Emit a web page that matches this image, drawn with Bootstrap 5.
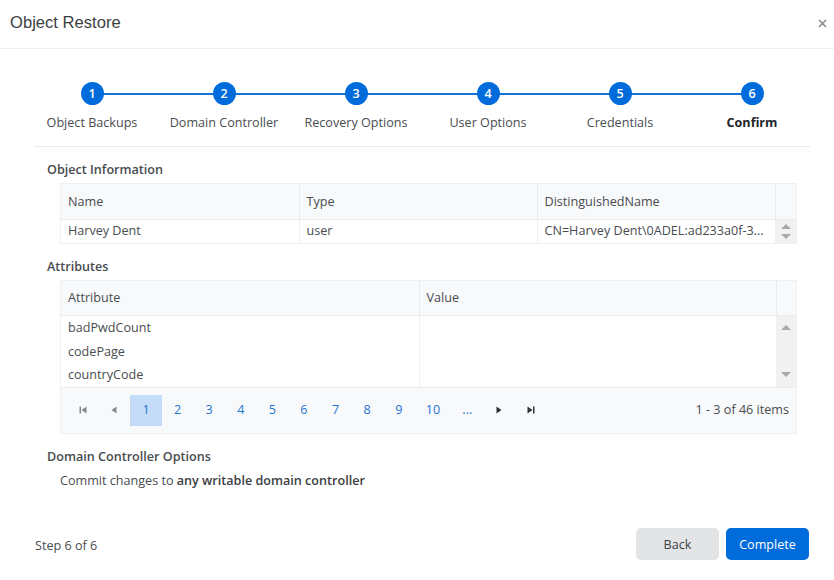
<!doctype html>
<html lang="en"><head><meta charset="utf-8"><title>Object Restore</title>
<link href="https://cdn.jsdelivr.net/npm/bootstrap@5.3.0/dist/css/bootstrap.min.css" rel="stylesheet">
<style>
html,body{height:580px;overflow:hidden;background:#fff}
body{font-family:"Open Sans","Noto Sans",sans-serif;font-size:12.6px;color:#484c50}
.dlg-head{height:49px;padding:0 7px 2px 10px;border-bottom:1px solid #eef0f2}
.dlg-title{font-family:"Liberation Sans",sans-serif;font-size:16.6px;font-weight:400;color:#3b3f43;margin:0}
.dlg-close{line-height:1;background:none;border:0;padding:0;display:flex}
.dlg-body{padding:33px 24px 0 34px}
.stepper{display:grid;grid-template-columns:repeat(6,132px);margin:0 -8px;height:65px}
.stepper-wrap{border-bottom:1px solid #e9ecef;height:65px}
.step-item{position:relative;text-align:center}
.step-item:not(:last-child)::after{content:"";position:absolute;top:10.5px;left:66px;width:132px;height:2px;background:#1473d6}
.step-dot{position:relative;z-index:1;width:23px;height:23px;border-radius:50%;background:#006bdb;color:#fff;font-size:12.6px;font-weight:600;line-height:23px;margin:0 auto 9px}
.step-name{display:block;white-space:nowrap;line-height:17px}
.step-on{font-weight:700;color:#212529}
.sec-title{font-size:12.6px;font-weight:600;color:#484c50;margin:0;line-height:17px;padding-left:13px}
.grid-box{margin:5px 13px 0 26px;border:1px solid #edeff1;width:737px}
.grid-tbl{table-layout:fixed;width:100%;margin:0;border-collapse:collapse;--bs-table-bg:transparent;--bs-table-color:#484c50}
.grid-tbl th{background:#f8f9fa;font-weight:400;height:35px;padding:2px 7px 0;border-right:1px solid #e9ecef;border-bottom:1px solid #e9ecef;vertical-align:middle}
.grid-tbl td{padding:0 7px;border-right:1px solid #f0f1f3;border-bottom:0;vertical-align:middle;white-space:nowrap;overflow:hidden}
.grid-tbl th:last-child{border-right:0}
.grid-tbl td.scroll-col{background:#f1f1f1;border-right:0;padding:0;overflow:hidden}
.row-one td{height:23px}
.row-list{display:block;line-height:23.5px}
.scroll-inner{display:flex;flex-direction:column;align-items:center;justify-content:space-between}
.up-tri{width:0;height:0;border-left:5px solid transparent;border-right:5px solid transparent;border-bottom:5px solid #a9a9a9}
.down-tri{width:0;height:0;border-left:5px solid transparent;border-right:5px solid transparent;border-top:5px solid #a9a9a9}
.scroll-a{height:23px;padding:4px 0}
.scroll-b{height:70px;padding:9px 0}
.pager-bar{height:46px;background:#f8f9fa;border-top:1px solid #e9ecef;padding:0 7px 0 6px}
.pg-btn{width:31.6px;height:31px;display:flex;align-items:center;justify-content:center;color:#1f76d2;text-decoration:none;font-size:12.6px}
.pg-wide{width:37px}
.pg-on{background:#c5dcf8}
.pg-ico{flex:none}
.opt-line{margin:7px 0 0;padding-left:26px;line-height:18px}
.opt-line b{font-weight:600;color:#3c4043}
.dlg-foot{padding:0 25px 0 35px;margin-top:38px}
.foot-step{padding-top:6px}
.foot-btns{gap:7px}
.foot-btn{width:83px;height:32px;border:0;border-radius:5px;font-size:12.6px;padding:1px 0 0;line-height:31px}
.foot-back{background:#e2e4e6;color:#3c4043}
.foot-done{background:#006bdb;color:#fff;font-weight:500}
.gap-sec1{margin-top:14px}
.gap-sec2{margin-top:14px}
.gap-sec3{margin-top:14px}
</style></head>
<body>
<header class="dlg-head d-flex align-items-center justify-content-between">
  <h1 class="dlg-title">Object Restore</h1>
  <button class="dlg-close" type="button" aria-label="Close"><svg width="9" height="9" viewBox="0 0 9 9"><path d="M1 1l7 7M8 1L1 8" stroke="#85898d" stroke-width="1.5" fill="none"/></svg></button>
</header>
<main class="dlg-body">
  <div class="stepper-wrap">
  <div class="stepper">
    <div class="step-item"><div class="step-dot">1</div><span class="step-name">Object Backups</span></div>
    <div class="step-item"><div class="step-dot">2</div><span class="step-name">Domain Controller</span></div>
    <div class="step-item"><div class="step-dot">3</div><span class="step-name">Recovery Options</span></div>
    <div class="step-item"><div class="step-dot">4</div><span class="step-name">User Options</span></div>
    <div class="step-item"><div class="step-dot">5</div><span class="step-name">Credentials</span></div>
    <div class="step-item"><div class="step-dot">6</div><span class="step-name step-on">Confirm</span></div>
  </div>
  </div>
  <h2 class="sec-title gap-sec1">Object Information</h2>
  <div class="grid-box">
    <table class="table grid-tbl">
      <colgroup><col style="width:238px"><col style="width:238px"><col style="width:238px"><col></colgroup>
      <thead><tr><th>Name</th><th>Type</th><th>DistinguishedName</th><th></th></tr></thead>
      <tbody><tr class="row-one"><td>Harvey Dent</td><td>user</td><td>CN=Harvey Dent\0ADEL:ad233a0f-3...</td>
        <td class="scroll-col"><div class="scroll-inner scroll-a"><span class="up-tri"></span><span class="down-tri"></span></div></td></tr></tbody>
    </table>
  </div>
  <h2 class="sec-title gap-sec2">Attributes</h2>
  <div class="grid-box">
    <table class="table grid-tbl">
      <colgroup><col style="width:358px"><col style="width:357px"><col></colgroup>
      <thead><tr><th>Attribute</th><th>Value</th><th></th></tr></thead>
      <tbody><tr><td><span class="row-list">badPwdCount</span><span class="row-list">codePage</span><span class="row-list">countryCode</span></td><td></td>
        <td class="scroll-col"><div class="scroll-inner scroll-b"><span class="up-tri"></span><span class="down-tri"></span></div></td></tr></tbody>
    </table>
    <nav class="pager-bar d-flex align-items-center justify-content-between">
      <div class="d-flex align-items-center">
        <a class="pg-btn" href="#" aria-label="First"><svg class="pg-ico" width="8" height="8" viewBox="0 0 8 8"><rect x="0.5" y="0.5" width="1.5" height="7" fill="#85898d"/><path d="M7.5 0.5v7L2.5 4z" fill="#85898d"/></svg></a>
        <a class="pg-btn" href="#" aria-label="Previous"><svg class="pg-ico" width="8" height="8" viewBox="0 0 8 8"><path d="M6.5 0.5v7L1.5 4z" fill="#85898d"/></svg></a>
        <a class="pg-btn pg-on" href="#">1</a><a class="pg-btn" href="#">2</a><a class="pg-btn" href="#">3</a><a class="pg-btn" href="#">4</a><a class="pg-btn" href="#">5</a><a class="pg-btn" href="#">6</a><a class="pg-btn" href="#">7</a><a class="pg-btn" href="#">8</a><a class="pg-btn" href="#">9</a><a class="pg-btn pg-wide" href="#">10</a><a class="pg-btn" href="#">...</a>
        <a class="pg-btn" href="#" aria-label="Next"><svg class="pg-ico" width="8" height="8" viewBox="0 0 8 8"><path d="M1.5 0.5v7L6.5 4z" fill="#2f3337"/></svg></a>
        <a class="pg-btn" href="#" aria-label="Last"><svg class="pg-ico" width="8" height="8" viewBox="0 0 8 8"><path d="M0.5 0.5v7L5.5 4z" fill="#2f3337"/><rect x="6" y="0.5" width="1.5" height="7" fill="#2f3337"/></svg></a>
      </div>
      <span>1 - 3 of 46 items</span>
    </nav>
  </div>
  <h2 class="sec-title gap-sec3">Domain Controller Options</h2>
  <p class="opt-line">Commit changes to <b>any writable domain controller</b></p>
</main>
<footer class="dlg-foot d-flex align-items-center justify-content-between">
  <span class="foot-step">Step 6 of 6</span>
  <div class="d-flex foot-btns">
    <button class="btn foot-btn foot-back" type="button">Back</button>
    <button class="btn foot-btn foot-done" type="button">Complete</button>
  </div>
</footer>
<script src="https://cdn.jsdelivr.net/npm/bootstrap@5.3.0/dist/js/bootstrap.bundle.min.js"></script>
</body></html>
